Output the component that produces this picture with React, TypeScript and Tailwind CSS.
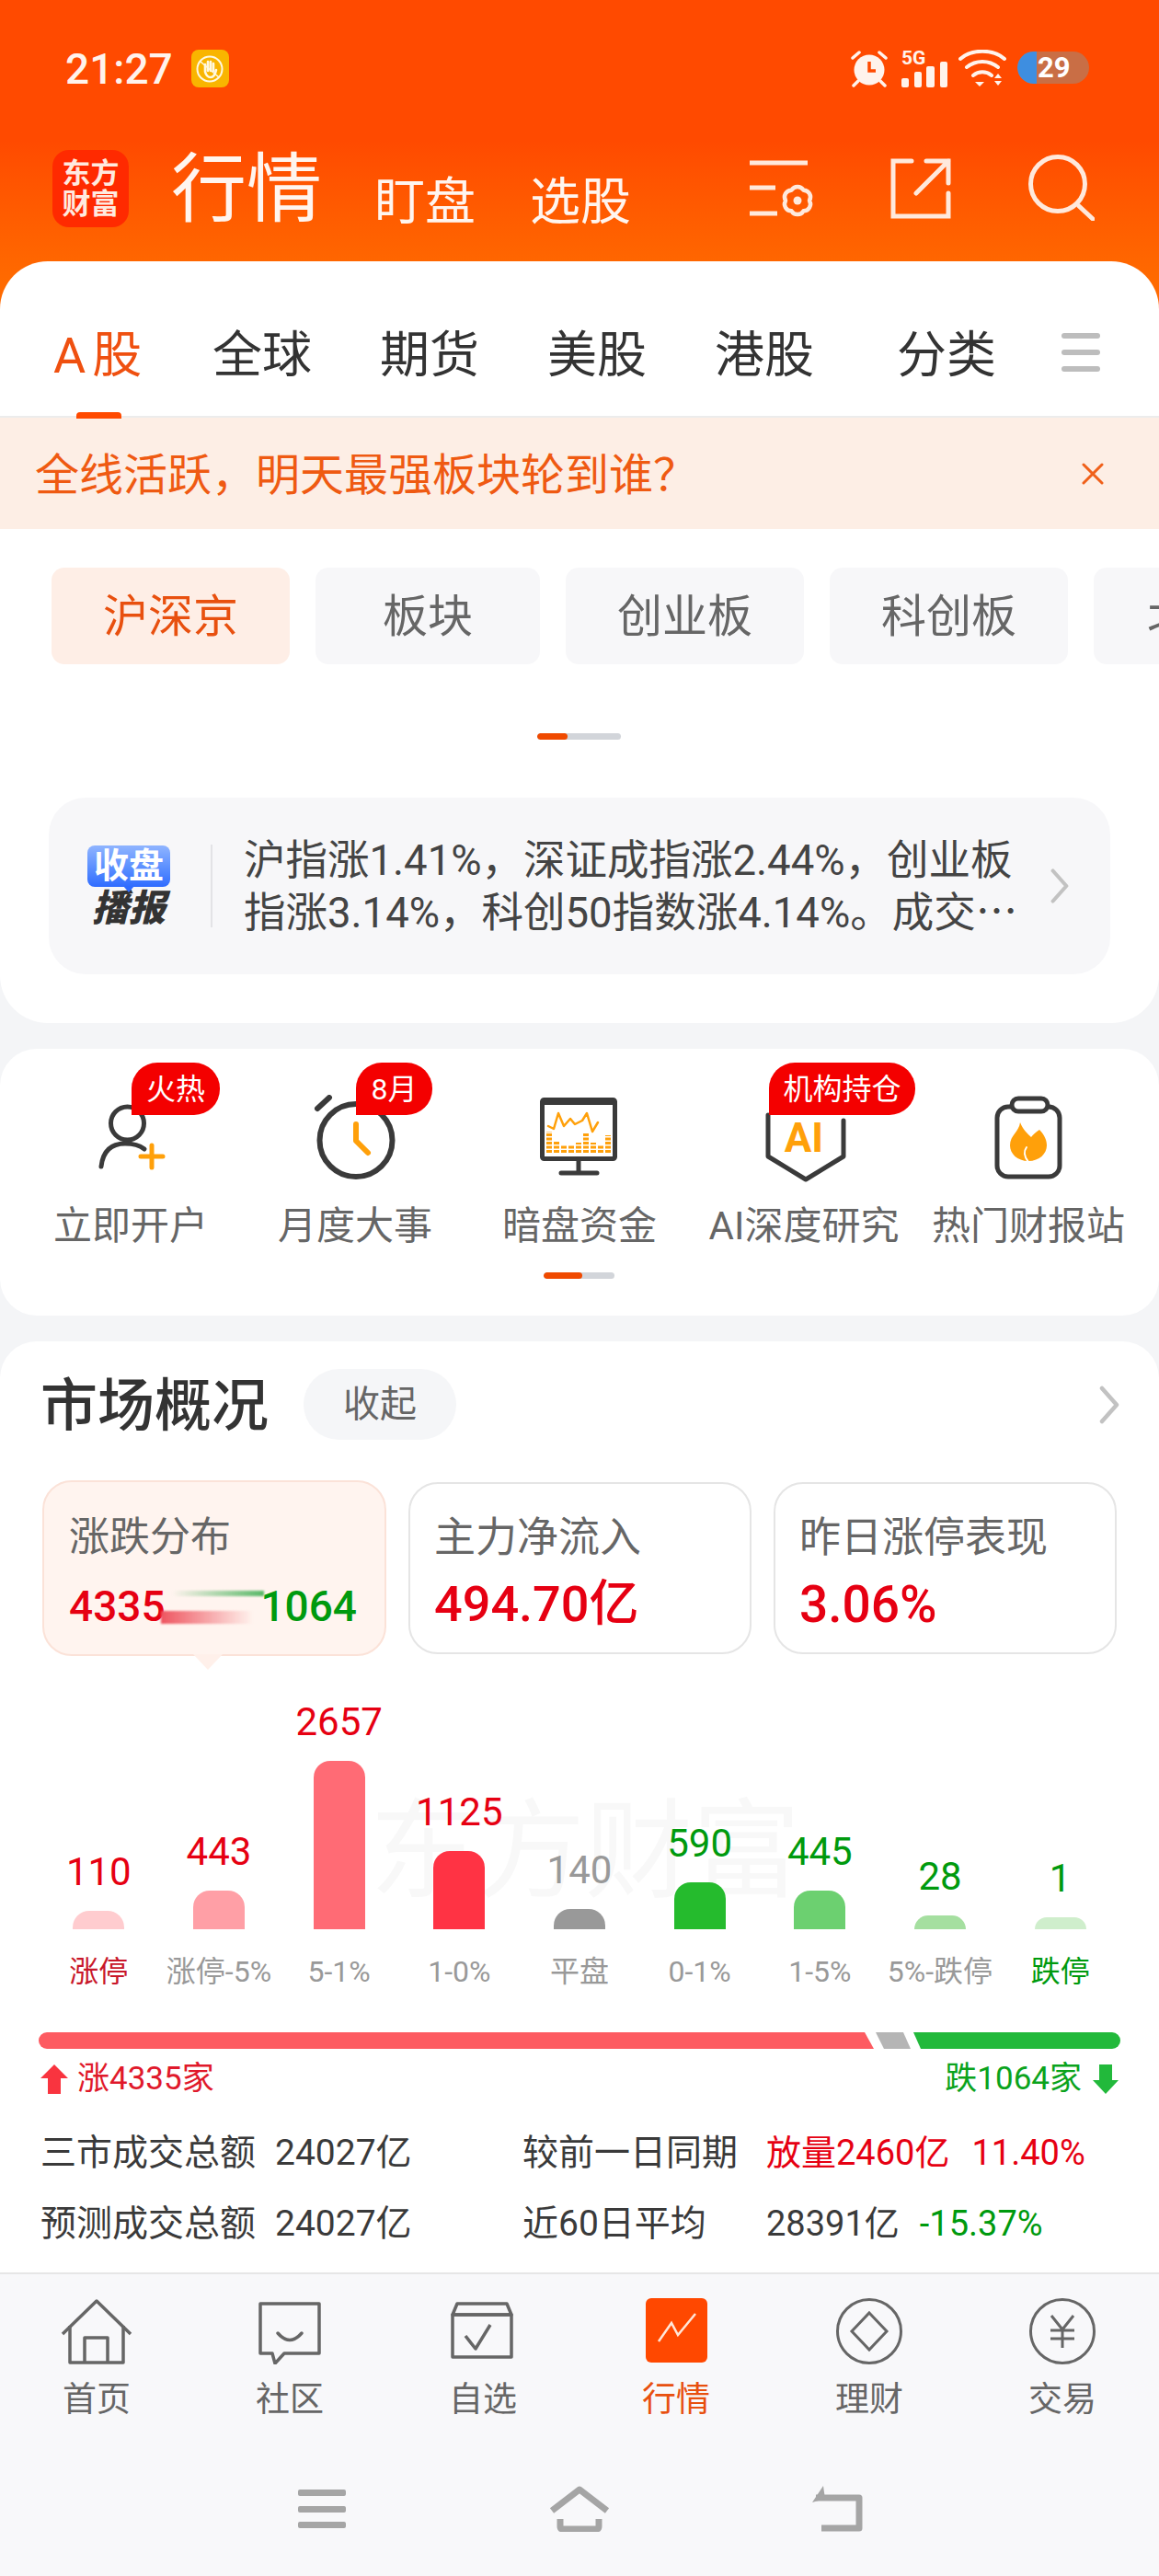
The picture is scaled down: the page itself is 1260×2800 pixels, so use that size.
const tabs = ["全球", "期货", "美股", "港股"];
const pills = [
  { name: "板块", cls: "w-[244px]" },
  { name: "创业板", cls: "w-[259px]" },
  { name: "科创板", cls: "w-[259px]" },
  { name: "北证50", cls: "w-[259px] justify-start pl-[58px]" },
];

const bars = [
  { value: "110", h: "h-[20px]", bar: "bg-[#ffcccf]", text: "text-[#e60012]", label: "涨停", labelCls: "text-[#c8172a]" },
  { value: "443", h: "h-[42px]", bar: "bg-[#ff9fa6]", text: "text-[#e60012]", label: "涨停-5%", labelCls: "text-[#999999]" },
  { value: "2657", h: "h-[183px]", bar: "bg-[#ff6b75]", text: "text-[#e60012]", label: "5-1%", labelCls: "text-[#999999]" },
  { value: "1125", h: "h-[85px]", bar: "bg-[#ff3344]", text: "text-[#e60012]", label: "1-0%", labelCls: "text-[#999999]" },
  { value: "140", h: "h-[22px]", bar: "bg-[#999999]", text: "text-[#999999]", label: "平盘", labelCls: "text-[#999999]" },
  { value: "590", h: "h-[51px]", bar: "bg-[#25bb2d]", text: "text-[#009a0e]", label: "0-1%", labelCls: "text-[#999999]" },
  { value: "445", h: "h-[42px]", bar: "bg-[#6cd070]", text: "text-[#009a0e]", label: "1-5%", labelCls: "text-[#999999]" },
  { value: "28", h: "h-[15px]", bar: "bg-[#a5dfa0]", text: "text-[#009a0e]", label: "5%-跌停", labelCls: "text-[#999999]" },
  { value: "1", h: "h-[13px]", bar: "bg-[#cfeecc]", text: "text-[#009a0e]", label: "跌停", labelCls: "text-[#009a0e]" },
];

function Chevron({ cls }: { cls: string }) {
  return (
    <svg viewBox="0 0 24 40" className={cls} fill="none" stroke="#c2c2c2" strokeWidth="4.5" strokeLinecap="round" strokeLinejoin="round">
      <path d="M4 2l16 18L4 38" />
    </svg>
  );
}

function StatusBar() {
  return (
    <div className="flex h-[112px] items-start pl-[71px] pr-[76px] pt-[54px] text-[#fff3ec]">
      <span className="text-[46px] font-medium leading-[42px]">21:27</span>
      <div className="ml-[20px] flex h-[41px] w-[41px] items-center justify-center rounded-[8px] bg-[#f9b500]">
        <svg viewBox="0 0 32 32" className="h-[32px] w-[32px]" fill="none" stroke="#fff8e0">
          <circle cx="16" cy="16" r="13.5" strokeWidth="2" />
          <path d="M11 19V11M14 18V8M17 18V8M20 18V10M11 19c1 4 3 6 6 6s5-3 6-8" strokeWidth="2.6" strokeLinecap="round" />
          <path d="M6 8l20 17" strokeWidth="1.6" />
        </svg>
      </div>
      <div className="ml-auto flex items-start">
        <svg viewBox="0 0 40 41" className="h-[41px] w-[40px]">
          <circle cx="20" cy="22" r="16.5" fill="#fff3ec" />
          <path d="M20 13v10h7" fill="none" stroke="#ff4a00" strokeWidth="3.5" />
          <path d="M2 9l7-6M38 9l-7-6M3 39l5-5M37 39l-5-5" stroke="#fff3ec" strokeWidth="3.5" strokeLinecap="round" />
        </svg>
        <div className="relative ml-[15px] h-[41px] w-[50px]">
          <span className="absolute left-0 top-[-2px] text-[21px] font-bold leading-[22px]">5G</span>
          <div className="absolute inset-x-0 bottom-0 flex items-end justify-between">
            <div className="h-[10px] w-[8px] rounded-[2px] bg-[#fff3ec]" />
            <div className="h-[17px] w-[8px] rounded-[2px] bg-[#fff3ec]" />
            <div className="h-[23px] w-[9px] rounded-[2px] bg-[#fff3ec]" />
            <div className="h-[28px] w-[8px] rounded-[2px] bg-[#fff3ec]" />
          </div>
        </div>
        <svg viewBox="0 0 53 41" className="ml-[12px] h-[41px] w-[53px]" fill="none" stroke="#fff3ec" strokeWidth="4" strokeLinecap="round">
          <path d="M2 10C14-1 38-1 50 10M9 19c10-8 24-8 34 0M16 28c6-5 14-5 20 0" />
          <path d="M18 35h10l-5 5z" fill="#fff3ec" stroke="none" />
          <path d="M39 31l4-5 4 5zM39 34l4 5 4-5z" fill="#fff3ec" stroke="none" />
        </svg>
        <div className="relative ml-[11px] mt-[2px] flex h-[35px] w-[78px] items-center overflow-hidden rounded-full bg-[#c96e45]">
          <div className="h-full w-[21px] rounded-l-full bg-[#3e8ee0]" />
          <span className="ml-[1px] text-[31px] font-bold leading-none text-white">29</span>
        </div>
      </div>
    </div>
  );
}

function TitleBar() {
  return (
    <div className="mt-[51px] flex h-[84px] items-end pl-[57px] pr-[70px] text-[#fff5ef]">
      <div className="flex h-[84px] w-[83px] flex-col items-center justify-center rounded-[18px] bg-[#ff2a00] text-[31px] font-bold leading-[33px] text-[#ffeadf]">
        <span>东方</span>
        <span>财富</span>
      </div>
      <span className="ml-[46px] text-[82px] leading-none">行情</span>
      <span className="ml-[57px] text-[55px] leading-none">盯盘</span>
      <span className="ml-[59px] text-[55px] leading-none">选股</span>
      <svg viewBox="0 0 72 66" className="mb-[9px] ml-auto h-[66px] w-[72px]" fill="none" stroke="#ffe9dc" strokeWidth="5">
        <path d="M0 5h63M0 32h28M0 60h30" />
        <path d="M65 46A7.5 7.5 0 0 1 58.500 57.260A7.500 7.500 0 0 1 45.500 57.260A7.500 7.500 0 0 1 39 46A7.500 7.500 0 0 1 45.500 34.740A7.500 7.500 0 0 1 58.500 34.740A7.500 7.500 0 0 1 65 46Z" strokeWidth="4.5" strokeLinejoin="round" />
        <circle cx="52" cy="46" r="4.5" fill="#ffe9dc" stroke="none" />
      </svg>
      <svg viewBox="0 0 66 66" className="mb-[9px] ml-[81px] h-[66px] w-[66px]" fill="none" stroke="#ffe9dc" strokeWidth="5" strokeLinecap="round">
        <path d="M23 3H3v60h60V38M28 38L63 3M39 3h24v24" />
      </svg>
      <svg viewBox="0 0 72 72" className="mb-[7px] ml-[84px] h-[72px] w-[72px]" fill="none" stroke="#ffe9dc" strokeWidth="5" strokeLinecap="round">
        <circle cx="32" cy="32" r="29.5" />
        <path d="M55 56l15 14" />
      </svg>
    </div>
  );
}

function MarketTop() {
  return (
    <div className="relative z-10 mt-[-56px] rounded-[52px] bg-white pb-[53px]">
      <div className="flex h-[168px] items-center gap-[76px] pl-[58px] pt-[30px] text-[54px] leading-none text-[#333333]">
        <div className="relative flex h-[54px] w-[97px] shrink-0 items-center gap-[7px] whitespace-nowrap text-[#ef5010]">
          <span className="pt-[7px]">A</span>
          <span className="pt-[7px]">股</span>
          <div className="absolute left-[25px] top-[92px] h-[7px] w-[49px] rounded-t-[4px] bg-[#ff4a00]" />
        </div>
        {tabs.map((t) => (
          <span key={t} className="w-[106px] shrink-0 whitespace-nowrap pt-[7px]">
            {t}
          </span>
        ))}
        <span className="ml-[16px] w-[106px] shrink-0 whitespace-nowrap pt-[7px]">分类</span>
        <div className="ml-[-3px] flex h-[42px] w-[42px] shrink-0 flex-col justify-between">
          <div className="h-[6px] rounded-full bg-[#bdbdbd]" />
          <div className="h-[6px] rounded-full bg-[#bdbdbd]" />
          <div className="h-[6px] rounded-full bg-[#bdbdbd]" />
        </div>
      </div>
      <div className="flex h-[123px] items-center justify-between border-t-2 border-[#ececec] bg-[#fdeee5] pl-[38px] pr-[60px] text-[48px] leading-none text-[#ef5a12]">
        <span className="pt-[4px]">全线活跃，明天最强板块轮到谁？</span>
        <svg viewBox="0 0 24 24" className="h-[24px] w-[24px]" fill="none" stroke="#f0601a" strokeWidth="3" strokeLinecap="round">
          <path d="M2 2l20 20M22 2L2 22" />
        </svg>
      </div>
      <div className="mt-[42px] flex gap-[28px] pl-[56px] text-[49px] leading-none text-[#666666]">
        <div className="flex h-[105px] w-[259px] shrink-0 items-center justify-center rounded-[14px] bg-[#feeee6] pt-[2px] text-[#e8500f]">沪深京</div>
        {pills.map((p) => (
          <div key={p.name} className={"flex h-[105px] shrink-0 items-center justify-center rounded-[14px] bg-[#f7f7f9] pt-[2px] " + p.cls}>
            {p.name}
          </div>
        ))}
      </div>
      <div className="ml-[584px] mt-[75px] h-[7px] w-[91px] overflow-hidden rounded-full bg-[#d2d5da]">
        <div className="h-full w-[33px] rounded-full bg-[#f04a00]" />
      </div>
      <div className="mx-[53px] mt-[63px] flex h-[192px] items-center rounded-[40px] bg-[#f7f7f9] pl-[42px]">
        <div className="flex w-[90px] flex-col items-center">
          <div className="relative flex h-[45px] w-[90px] items-center justify-center rounded-[8px] bg-gradient-to-b from-[#8fb4ff] to-[#2f6bff] text-[38px] font-bold leading-none text-white">
            收盘
            <div className="absolute bottom-[-6px] left-[39px] h-0 w-0 border-x-[6px] border-t-[7px] border-x-transparent border-t-[#2f6bff]" />
          </div>
          <span className="mt-[4px] text-[40px] font-black italic leading-[40px] text-[#333333]">播报</span>
        </div>
        <div className="ml-[44px] h-[90px] w-[2px] bg-[#e3e3e6]" />
        <div className="ml-[34px] whitespace-nowrap pt-[3px] text-[45.500px] leading-[52px] text-[#444444]">
          <div>沪指涨1.41%，深证成指涨2.44%，创业板</div>
          <div>
            指涨3.14%，科创50指数涨4.14%。成交
            <span className="[font-family:'Noto_Sans_CJK_SC']">…</span>
          </div>
        </div>
        <Chevron cls="ml-auto mr-[44px] h-[38px] w-[22px] shrink-0" />
      </div>
    </div>
  );
}

function Shortcuts() {
  return (
    <div className="mt-[28px] h-[290px] rounded-[40px] bg-white px-[20px]">
      <div className="grid grid-cols-5 text-center text-[42px] leading-[42px] text-[#666666]">
        <div className="relative flex flex-col items-center pt-[50px]">
          <svg viewBox="0 0 100 100" className="h-[100px] w-[100px]" fill="none" stroke="#3a3a3a" strokeWidth="5" strokeLinecap="round">
            <circle cx="46.5" cy="31" r="18" />
            <path d="M18 78c2-18 12-25 26-25 8 0 16 2 21 6" />
            <path d="M61 67h24M73 55v24" stroke="#ffa00a" />
          </svg>
          <div className="absolute left-[123px] top-[15px] flex h-[57px] w-[96px] items-center justify-center rounded-[28px] rounded-bl-none bg-[#f40000] text-[32px] leading-none text-white">火热</div>
          <span className="mt-[22px]">立即开户</span>
        </div>
        <div className="relative flex flex-col items-center pt-[50px]">
          <svg viewBox="0 0 100 100" className="h-[100px] w-[100px]" fill="none" stroke="#3a3a3a" strokeWidth="6" strokeLinecap="round" strokeLinejoin="round">
            <circle cx="51" cy="49.5" r="39.5" />
            <path d="M9 15L22 3" />
            <path d="M51 32v18l13 13" stroke="#ffa00a" />
          </svg>
          <div className="absolute left-[123px] top-[15px] flex h-[57px] w-[83px] items-center justify-center rounded-[28px] rounded-bl-none bg-[#f40000] text-[32px] leading-none text-white">8月</div>
          <span className="mt-[22px]">月度大事</span>
        </div>
        <div className="relative flex flex-col items-center pt-[50px]">
          <svg viewBox="0 0 100 100" className="h-[100px] w-[100px]" fill="none" stroke="#3a3a3a" strokeWidth="5" strokeLinecap="round" strokeLinejoin="round">
            <rect x="9.5" y="5.5" width="79" height="64" rx="2" />
            <path d="M9 9h80" strokeWidth="4" />
            <path d="M49 70v15M30 85h39" />
            <path d="M16 34l6 3 5-17 6 14 7-8 5 6 8-4 5-8 6 20 6-10" stroke="#ffa00a" strokeWidth="2.5" />
            <path d="M17 63V40M25 63V50M33 63V54M41 63V55M49 63V52M57 63V42M65 63V52M73 63V54M81 63V44" stroke="#ffa00a" strokeWidth="6" strokeLinecap="butt" strokeDasharray="3 1.5" />
          </svg>
          <span className="mt-[22px]">暗盘资金</span>
        </div>
        <div className="relative flex flex-col items-center pt-[50px]">
          <svg viewBox="0 0 100 100" className="h-[100px] w-[100px]" fill="none" stroke="#3a3a3a" strokeWidth="5" strokeLinecap="round" strokeLinejoin="round">
            <path d="M11 22v45l41 25 41-25V28" />
            <text x="50" y="62" textAnchor="middle" fontSize="44" fontWeight="700" fill="#ffa00a" stroke="none">AI</text>
          </svg>
          <div className="absolute left-[84px] top-[15px] flex h-[57px] w-[159px] items-center justify-center rounded-[28px] rounded-bl-none bg-[#f40000] text-[32px] leading-none text-white">机构持仓</div>
          <span className="mt-[22px] whitespace-nowrap">AI深度研究</span>
        </div>
        <div className="relative flex flex-col items-center pt-[50px]">
          <svg viewBox="0 0 100 100" className="h-[100px] w-[100px]" fill="none" stroke="#3a3a3a" strokeWidth="5" strokeLinecap="round" strokeLinejoin="round">
            <rect x="16" y="13" width="68" height="76" rx="12" />
            <rect x="32" y="4" width="39" height="14" rx="7" fill="#ffffff" />
            <path d="M41 30C44 38 49 42 53 46C55 43 58 41 62 38C68 44 70 50 70 55C70 64 62 72 50 72C38 72 30 64 30 55C30 44 40 40 41 30Z" fill="#ffa00a" stroke="none" />
            <path d="M50 73C45 67 45 61 48 57" stroke="#ffffff" strokeWidth="2" />
          </svg>
          <span className="mt-[22px] whitespace-nowrap">热门财报站</span>
        </div>
      </div>
      <div className="ml-[571px] mt-[29px] h-[7px] w-[77px] overflow-hidden rounded-full bg-[#d2d5da]">
        <div className="h-full w-[42px] rounded-full bg-[#f04a00]" />
      </div>
    </div>
  );
}

function Overview() {
  return (
    <div className="relative mt-[28px] h-[1012px] rounded-t-[40px] bg-white">
      <div className="flex h-[107px] items-center pl-[44px] pr-[42px] pt-[30px]">
        <span className="pt-[4px] text-[62px] font-medium leading-[73px] text-[#333333]">市场概况</span>
        <div className="ml-[38px] flex h-[77px] w-[166px] items-center justify-center rounded-full bg-[#f5f6f8] text-[40px] leading-none text-[#666666]">收起</div>
        <Chevron cls="ml-auto h-[42px] w-[24px]" />
      </div>

      <div className="mt-[44px] flex gap-[24px] pl-[46px]">
        <div className="relative h-[191px] w-[374px] rounded-[32px] border-2 border-[#fbe2d8] bg-[#fff4ef] pl-[27px] pr-[30px] pt-[38px]">
          <div className="text-[44px] leading-[44px] text-[#666666]">涨跌分布</div>
          <div className="relative mt-[30px] flex justify-between text-[46px] font-medium leading-[46px]">
            <span className="text-[#e60012]">4335</span>
            <span className="text-[#009a0e]">1064</span>
            <div className="absolute left-[100px] top-[28px] h-[14px] w-[100px] bg-gradient-to-r from-[#ee5560] to-transparent blur-[1px]" />
            <div className="absolute left-[112px] top-[6px] h-[6px] w-[100px] bg-gradient-to-l from-[#5ab868] to-transparent blur-[1px]" />
          </div>
          <div className="absolute bottom-[-17px] left-[162px] h-0 w-0 border-x-[16px] border-t-[17px] border-x-transparent border-t-[#fff0ea]" />
        </div>
        <div className="h-[187px] w-[373px] self-center rounded-[32px] border-2 border-[#e5e5e5] px-[26px] pt-[37px]">
          <div className="text-[45px] leading-[44px] text-[#666666]">主力净流入</div>
          <div className="mt-[22px] text-[54px] font-medium leading-[56px] text-[#e60012]">494.70亿</div>
        </div>
        <div className="h-[187px] w-[373px] self-center rounded-[32px] border-2 border-[#e5e5e5] px-[26px] pt-[37px]">
          <div className="text-[45px] leading-[44px] text-[#666666]">昨日涨停表现</div>
          <div className="mt-[22px] text-[55px] font-medium leading-[56px] text-[#e60012]">3.06%</div>
        </div>
      </div>

      <div className="relative mt-[17px] px-[42px]">
        <div className="absolute bottom-[88px] left-[402px] whitespace-nowrap text-[117px] leading-none text-[#f8f8f8]">东方财富</div>
        <div className="relative grid h-[280px] grid-cols-9 items-end">
          {bars.map((b) => (
            <div key={b.label} className="flex flex-col items-center">
              <span className={"mb-[20px] text-[42px] leading-[44px] " + b.text}>{b.value}</span>
              <div className={"w-[56px] rounded-t-[18px] " + b.h + " " + b.bar} />
            </div>
          ))}
        </div>
        <div className="relative mt-[29px] grid grid-cols-9">
          {bars.map((b) => (
            <span key={b.label} className={"whitespace-nowrap text-center text-[32px] leading-[34px] " + b.labelCls}>
              {b.label}
            </span>
          ))}
        </div>
      </div>

      <div className="mx-[42px] mt-[49px] h-[18px] overflow-hidden rounded-full">
        <svg viewBox="0 0 1176 18" className="block h-[18px] w-[1176px]">
          <polygon points="0,0 898,0 908,18 0,18" fill="#fd5b61" />
          <polygon points="910,0 940,0 948,18 919,18" fill="#b5b5b5" />
          <polygon points="951,0 1176,0 1176,18 959,18" fill="#22b93b" />
        </svg>
      </div>

      <div className="mt-[13px] flex items-center justify-between pl-[44px] pr-[44px] text-[35px] leading-[40px]">
        <div className="flex items-center gap-[10px] text-[#e0192b]">
          <svg viewBox="0 0 30 32" className="h-[32px] w-[30px]">
            <path d="M15 0l15 15H22v17H8V15H0z" fill="#f9343f" />
          </svg>
          <span>涨4335家</span>
        </div>
        <div className="flex items-center gap-[12px] text-[#0ba31d]">
          <span>跌1064家</span>
          <svg viewBox="0 0 28 32" className="h-[32px] w-[28px]">
            <path d="M14 32L0 17h7V0h14v17h7z" fill="#22b93b" />
          </svg>
        </div>
      </div>

      <div className="mt-[38px] grid grid-cols-[255px_269px_265px_1fr] gap-y-[33px] pl-[44px] text-[39px] leading-[44px] text-[#3a3a3a]">
        <span>三市成交总额</span>
        <span>24027亿</span>
        <span>较前一日同期</span>
        <span className="flex gap-[24px] whitespace-nowrap text-[38px] text-[#e60012]">
          <span>放量2460亿</span>
          <span>11.40%</span>
        </span>
        <span>预测成交总额</span>
        <span>24027亿</span>
        <span>近60日平均</span>
        <span className="flex gap-[22px] whitespace-nowrap text-[38px]">
          <span>28391亿</span>
          <span className="text-[#009a0e]">-15.37%</span>
        </span>
      </div>
    </div>
  );
}

function BottomNav() {
  const cell = "flex flex-col items-center";
  const label = "mt-[19px] text-[37px] leading-[40px]";
  return (
    <div className="h-[330px] border-t-2 border-[#e6e6e6] bg-[#f8f8fa] pt-[26px] text-[#666666]">
      <div className="grid grid-cols-6">
        <div className={cell}>
          <svg viewBox="0 0 80 72" className="h-[72px] w-[80px]" fill="none" stroke="#666666" strokeWidth="3.5" strokeLinejoin="round">
            <path d="M3 39L40 3l37 36" />
            <path d="M11 30v40h58V30M27 70V43h25v27" />
          </svg>
          <span className={label}>首页</span>
        </div>
        <div className={cell}>
          <svg viewBox="0 0 80 72" className="h-[72px] w-[80px]" fill="none" stroke="#666666" strokeWidth="3.5" strokeLinejoin="round" strokeLinecap="round">
            <path d="M8 6h64v54H34L24 71l-3-11H8z" />
            <path d="M27 38q13 15 26 0" />
          </svg>
          <span className={label}>社区</span>
        </div>
        <div className={cell}>
          <svg viewBox="0 0 80 72" className="h-[72px] w-[80px]" fill="none" stroke="#666666" strokeWidth="3.5" strokeLinejoin="round">
            <path d="M12 6h54l5 12H7z" />
            <path d="M7 18h64v46H7z" />
            <path d="M21 41l11 14 16-26" />
          </svg>
          <span className={label}>自选</span>
        </div>
        <div className={cell}>
          <div className="mb-[2px] flex h-[70px] w-[67px] items-center justify-center rounded-[6px] bg-[#ff4800]">
            <svg viewBox="0 0 67 70" className="h-[70px] w-[67px]" fill="none" stroke="#ffe6d8" strokeWidth="2.5">
              <path d="M14 47l14-20 7 13 19-23" />
            </svg>
          </div>
          <span className={label + " text-[#e8500f]"}>行情</span>
        </div>
        <div className={cell}>
          <svg viewBox="0 0 80 72" className="h-[72px] w-[80px]" fill="none" stroke="#666666" strokeWidth="3">
            <circle cx="40" cy="36" r="34.5" />
            <path d="M40 16l19 20-19 20-19-20z" />
          </svg>
          <span className={label}>理财</span>
        </div>
        <div className={cell}>
          <svg viewBox="0 0 80 72" className="h-[72px] w-[80px]" fill="none" stroke="#666666" strokeWidth="3">
            <circle cx="40" cy="36" r="34.5" />
            <path d="M28 19l12 15 12-15M27 35h26M27 44h26M40 34v20" />
          </svg>
          <span className={label}>交易</span>
        </div>
      </div>
      <div className="mt-[73px] flex items-start pl-[324px]">
        <div className="mt-[4px] flex h-[42px] w-[52px] flex-col justify-between">
          <div className="h-[7px] rounded-[2px] bg-[#a5a5a5]" />
          <div className="h-[7px] rounded-[2px] bg-[#a5a5a5]" />
          <div className="h-[7px] rounded-[2px] bg-[#a5a5a5]" />
        </div>
        <svg viewBox="0 0 66 50" className="ml-[221px] h-[50px] w-[66px]" fill="none" stroke="#a5a5a5" strokeWidth="7" strokeLinejoin="round">
          <path d="M3 27L33 4l30 23" />
          <path d="M12 36v8q0 3 3 3h36q3 0 3-3v-8" />
        </svg>
        <svg viewBox="0 0 55 50" className="ml-[220px] h-[50px] w-[55px]" fill="none" stroke="#a5a5a5" strokeWidth="7" strokeLinejoin="round">
          <path d="M4 13h47v33H10" />
          <path d="M0 18L12 0l2 14z" fill="#a5a5a5" stroke="none" />
        </svg>
      </div>
    </div>
  );
}

export default function App() {
  return (
    <div className="h-[2800px] w-[1260px] overflow-hidden bg-[#f4f5f7] [font-family:Roboto,'Noto_Sans_CJK_SC',sans-serif]">
      <div className="h-[340px] bg-gradient-to-b from-[#ff4a00] from-[45%] to-[#ff6a00] to-[90%]">
        <StatusBar />
        <TitleBar />
      </div>
      <MarketTop />
      <Shortcuts />
      <Overview />
      <BottomNav />
    </div>
  );
}
